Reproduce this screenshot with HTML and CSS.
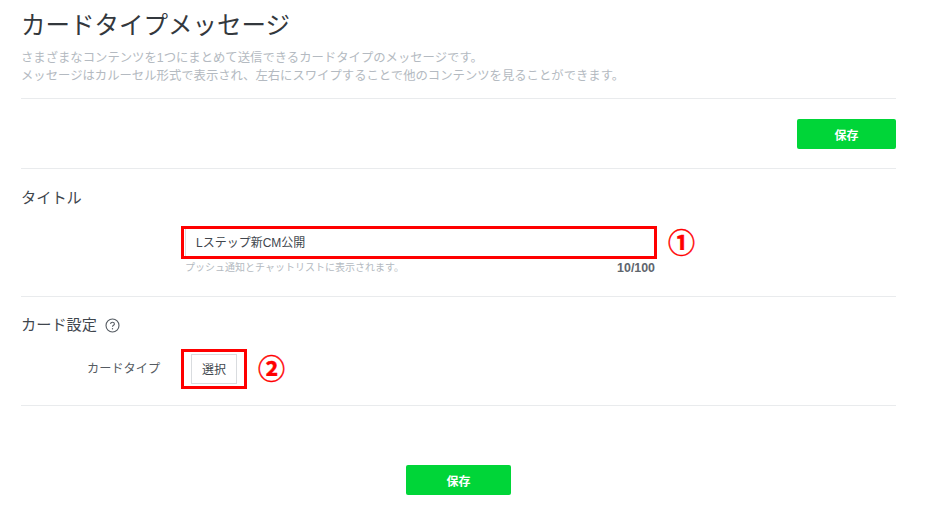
FILE: index.html
```html
<!DOCTYPE html>
<html lang="ja">
<head>
    <meta charset="UTF-8">
    <meta name="viewport" content="width=device-width, initial-scale=1.0">
    <title>カードタイプメッセージ</title>
    <link rel="stylesheet" href="styles.css">
</head>
<body>
    <div class="page">
        <header class="page-head">
            <h1>カードタイプメッセージ</h1>
            <p>さまざまなコンテンツを1つにまとめて送信できるカードタイプのメッセージです。<br>メッセージはカルーセル形式で表示され、左右にスワイプすることで他のコンテンツを見ることができます。</p>
        </header>

        <div class="top-actions">
            <button type="button" class="btn-save">保存</button>
        </div>

        <section class="title-section">
            <h2>タイトル</h2>
            <div class="title-field">
                <div class="input-wrap">
                    <input type="text" class="title-input" value="Lステップ新CM公開">
                    <span class="mark mark-input"></span>
                    <span class="num num-input">①</span>
                </div>
                <div class="field-help">
                    <span>プッシュ通知とチャットリストに表示されます。</span>
                    <span class="count">10/100</span>
                </div>
            </div>
        </section>

        <section class="card-section">
            <h2>カード設定
                <svg class="help-icon" width="15" height="15" viewBox="0 0 15 15" fill="none" stroke="#555b62">
                    <circle cx="7.5" cy="7.5" r="6.5" stroke-width="1.1"/>
                    <path d="M5.6 6c0-1.1.9-1.8 1.9-1.8s1.9.7 1.9 1.7c0 1.4-1.9 1.4-1.9 2.8" stroke-width="1.1"/>
                    <circle cx="7.5" cy="10.7" r=".7" fill="#555b62" stroke="none"/>
                </svg>
            </h2>
            <div class="type-row">
                <span class="type-label">カードタイプ</span>
                <div class="select-wrap">
                    <button type="button" class="btn-select">選択</button>
                    <span class="mark mark-select"></span>
                    <span class="num num-select">②</span>
                </div>
            </div>
        </section>

        <div class="bottom-actions">
            <button type="button" class="btn-save btn-save-wide">保存</button>
        </div>
    </div>
</body>
</html>
```

FILE: styles.css
```css
* {
    box-sizing: border-box;
}

body {
    margin: 0;
    background: #fff;
    color: #40464d;
    font-family: "Liberation Sans", "Noto Sans CJK JP", sans-serif;
}

.page {
    width: 875px;
    margin-left: 21px;
}

.page-head {
    height: 99px;
    padding-top: 9px;
    border-bottom: 1px solid #e9ebed;
}

h1 {
    margin: 0;
    font-size: 24.5px;
    line-height: 34px;
    font-weight: 400;
    color: #33383d;
}

.page-head p {
    margin: 6px 0 0;
    font-size: 12.35px;
    line-height: 18px;
    color: #b4bac1;
}

.top-actions {
    display: flex;
    justify-content: flex-end;
    height: 70px;
    padding-top: 20px;
    border-bottom: 1px solid #e9ebed;
}

.btn-save {
    width: 99px;
    height: 30px;
    padding: 0;
    border: none;
    border-radius: 2px;
    background: #00d538;
    color: #fff;
    font-family: inherit;
    font-size: 12px;
    font-weight: 700;
}

.btn-save-wide {
    width: 105px;
}

h2 {
    display: flex;
    align-items: center;
    gap: 8px;
    margin: 0;
    font-size: 15.2px;
    line-height: 22px;
    font-weight: 400;
    color: #40464d;
}

.title-section {
    height: 128px;
    padding-top: 18px;
    border-bottom: 1px solid #e9ebed;
}

.title-field {
    width: 470px;
    margin: 18px 0 0 164px;
}

.input-wrap {
    position: relative;
    height: 30px;
}

.title-input {
    display: block;
    width: 100%;
    height: 30px;
    padding: 0 10px 2px;
    border: 1px solid #d9dcdf;
    outline: none;
    color: #40464d;
    font-family: inherit;
    font-size: 12px;
}

.field-help {
    display: flex;
    justify-content: space-between;
    margin-top: 4px;
    font-size: 10px;
    line-height: 14px;
    color: #b4bac1;
}

.count {
    color: #5f666d;
    font-size: 12.4px;
    font-weight: 700;
}

.mark {
    position: absolute;
    border: 3px solid #f00;
}

.mark-input {
    inset: -1px -2px -2px -4px;
}

.num {
    position: absolute;
    color: #f00;
    font-size: 27px;
    line-height: 30px;
    font-weight: 700;
    -webkit-text-stroke: 0.4px #f00;
}

.num-input {
    left: 483px;
    top: 2px;
}

.card-section {
    height: 109px;
    padding-top: 17px;
    border-bottom: 1px solid #e9ebed;
}

.type-row {
    display: flex;
    align-items: center;
    margin-top: 18px;
}

.type-label {
    width: 170px;
    padding: 0 0 2px 66px;
    font-size: 12.2px;
    color: #555b62;
}

.select-wrap {
    position: relative;
    height: 30px;
}

.btn-select {
    display: block;
    width: 46px;
    height: 30px;
    padding: 0 0 2px;
    border: 1px solid #d9dcdf;
    background: #fff;
    color: #40464d;
    font-family: inherit;
    font-size: 12px;
}

.mark-select {
    inset: -5px -10px -5px -10px;
}

.num-select {
    left: 67px;
    top: 1px;
}

.bottom-actions {
    display: flex;
    justify-content: center;
    padding-top: 59px;
}
```
